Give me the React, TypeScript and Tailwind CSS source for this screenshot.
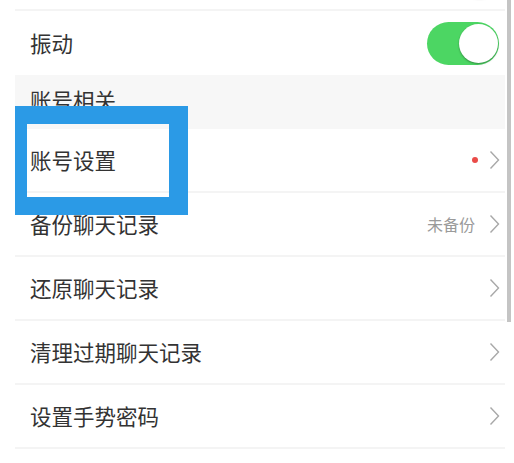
import { ReactNode } from "react";

const font = { fontFamily: '"Noto Sans CJK SC", "Noto Sans", sans-serif' };

function Toggle() {
  return (
    <div className="relative h-[43px] w-[72px] rounded-full bg-[#4cd663]">
      <div className="absolute right-[1px] top-[2px] h-[39px] w-[39px] rounded-full bg-white shadow-[0_1px_2px_rgba(0,0,0,0.35)]" />
    </div>
  );
}

function Chevron() {
  return (
    <svg width="11" height="20" viewBox="0 0 11 20" fill="none">
      <path d="M1.5 1.5 L9.5 10 L1.5 18.5" stroke="#a8a8a8" strokeWidth="1.4" />
    </svg>
  );
}

function Row({ label, right, gap = "gap-[11px]" }: { label: string; right?: ReactNode; gap?: string }) {
  return (
    <div className="flex h-[64px] items-center justify-between border-b-2 border-[#f4f4f4] pl-[15px] pr-[5px]">
      <span className="text-[21.5px] text-[#333333]">{label}</span>
      <div className={`flex items-center ${gap}`}>{right}</div>
    </div>
  );
}

export default function App() {
  return (
    <div className="relative h-[463px] w-[514px] overflow-hidden bg-white" style={font}>
      <div className="ml-[15px] mr-[9px]">
        {/* previous row, mostly scrolled away */}
        <div className="flex h-[11px] items-end justify-end overflow-hidden border-b-2 border-[#f4f4f4] pr-[5px]">
          <div className="mb-[9px]">
            <Toggle />
          </div>
        </div>

        <div className="flex h-[64px] items-center justify-between pl-[15px] pr-[6px]">
          <span className="text-[21.5px] text-[#333333]">振动</span>
          <Toggle />
        </div>

        <div className="flex h-[54px] items-center bg-[#f7f7f7] pb-[4px] pl-[15px]">
          <span className="text-[21.5px] text-[#333333]">账号相关</span>
        </div>

        <Row
          label="账号设置"
          right={
            <>
              <span className="h-[6px] w-[6px] rounded-full bg-[#ea4b48]" />
              <Chevron />
            </>
          }
        />
        <Row
          label="备份聊天记录"
          gap="gap-[14px]"
          right={
            <>
              <span className="text-[16px] text-[#9a9a9a]">未备份</span>
              <Chevron />
            </>
          }
        />
        <Row label="还原聊天记录" right={<Chevron />} />
        <Row label="清理过期聊天记录" right={<Chevron />} />
        <Row label="设置手势密码" right={<Chevron />} />
      </div>

      {/* scrollbar */}
      <div className="absolute right-[3px] top-0 h-[322px] w-[4px] bg-[#c4c4c4]" />

      {/* highlight annotation */}
      <div className="absolute left-[15px] top-[106px] h-[109px] w-[173px] border-b-[18px] border-l-[12px] border-r-[19px] border-t-[18px] border-[#2b9ae6]" />
    </div>
  );
}
